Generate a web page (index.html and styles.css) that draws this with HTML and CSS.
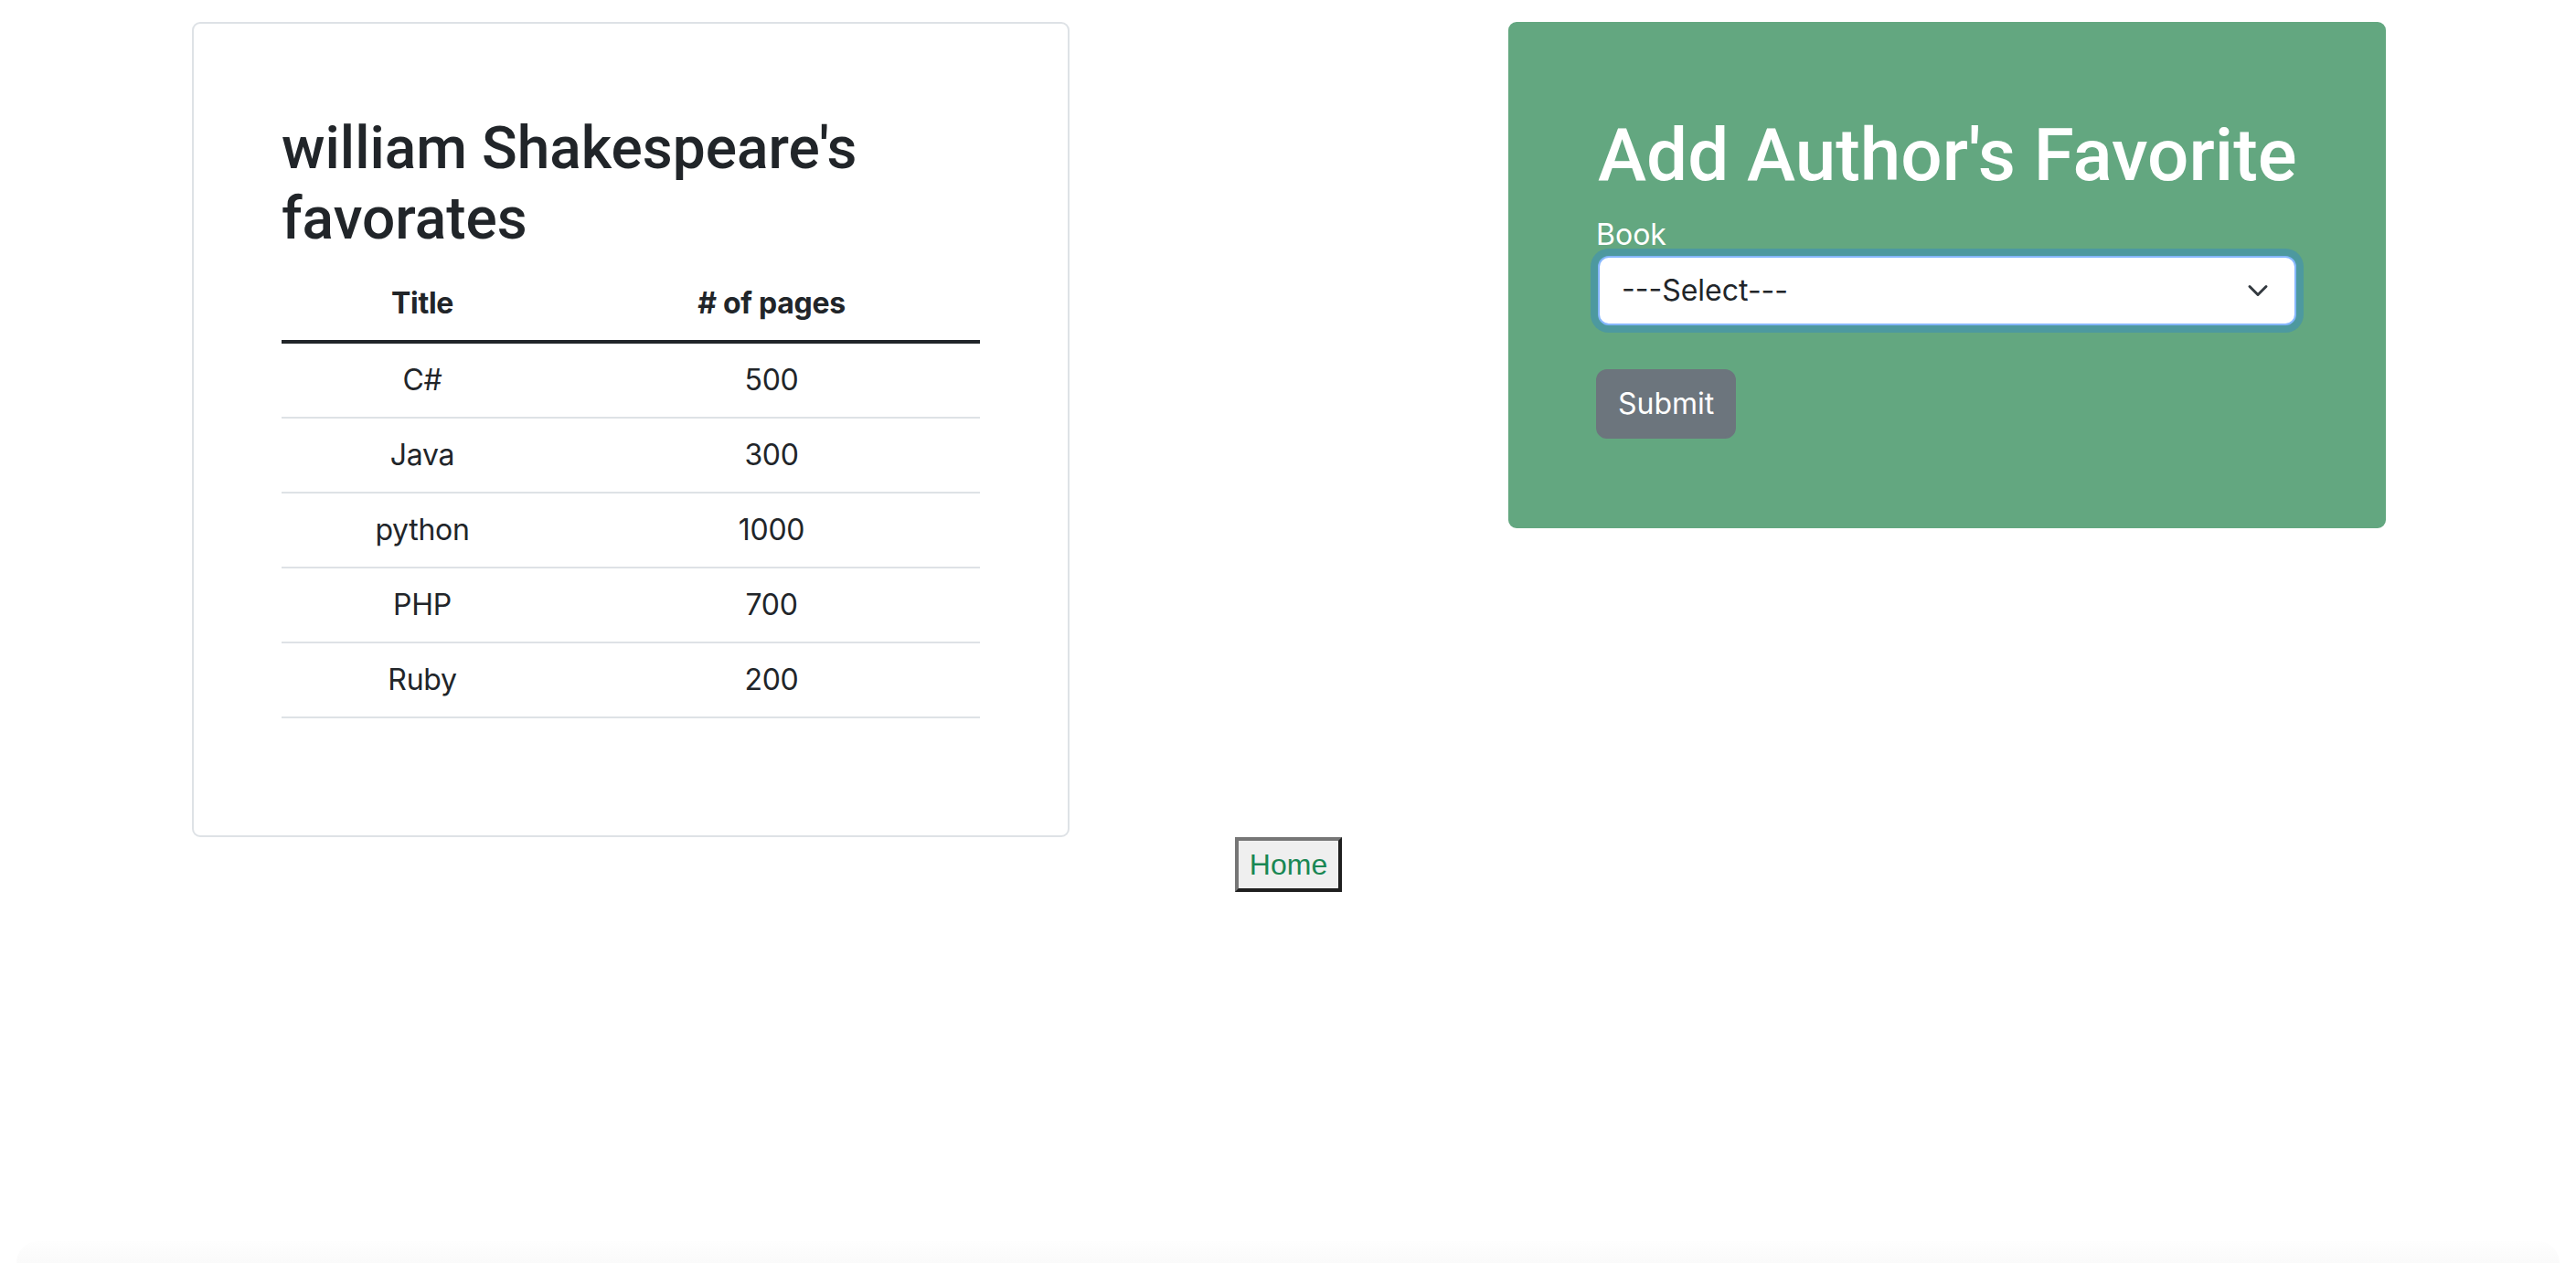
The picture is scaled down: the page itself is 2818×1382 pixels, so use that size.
FILE: index.html
```html
<!DOCTYPE html>
<html lang="en">
<head>
<meta charset="utf-8">
<title>Author's Favorites</title>
<link rel="stylesheet" href="styles.css">
</head>
<body>
<div class="page">
  <div class="cards">
    <section class="card card-list">
      <h2 class="title">william Shakespeare's favorates</h2>
      <table class="books">
        <colgroup><col class="col-title"><col class="col-pages"></colgroup>
        <thead>
          <tr><th>Title</th><th># of pages</th></tr>
        </thead>
        <tbody>
          <tr><td>C#</td><td>500</td></tr>
          <tr><td>Java</td><td>300</td></tr>
          <tr><td>python</td><td>1000</td></tr>
          <tr><td>PHP</td><td>700</td></tr>
          <tr><td>Ruby</td><td>200</td></tr>
        </tbody>
      </table>
    </section>
    <section class="card card-form">
      <h1 class="form-title">Add Author's Favorite</h1>
      <form class="fav-form">
        <label class="lbl" for="book">Book</label>
        <div class="select-wrap">
          <select id="book" class="sel">
            <option>---Select---</option>
          </select>
          <svg class="chev" viewBox="0 0 16 16" width="24" height="24" aria-hidden="true"><path d="m2 5 6 6 6-6" fill="none" stroke="#343a40" stroke-width="2" stroke-linecap="round" stroke-linejoin="round"/></svg>
        </div>
        <button type="button" class="btn-submit">Submit</button>
      </form>
    </section>
  </div>
  <div class="home-wrap">
    <button type="button" class="home"><a class="home-link" href="#">Home</a></button>
  </div>
</div>
<div class="bottom-shade"></div>
</body>
</html>
```

FILE: styles.css
```css
* { box-sizing: border-box; }

html, body {
  margin: 0;
  padding: 0;
  background: #fff;
}

body {
  font-family: Inter, "Noto Sans", "Liberation Sans", sans-serif;
  font-size: 32px;
  line-height: 1.5;
  color: #212529;
}

.cards {
  display: flex;
  align-items: flex-start;
  gap: 480px;
  padding: 24px 208px 0 210px;
}

.card {
  width: 960px;
  flex: 0 0 960px;
  border: 2px solid #dee2e6;
  border-radius: 9px;
  padding: 96px;
}

.card-form {
  background: #63a780;
  border-color: #63a780;
  color: #fff;
}

.title {
  margin: 0 0 13px 0;
  padding-top: 3px;
  font-family: Roboto, Inter, sans-serif;
  font-size: 64px;
  font-weight: 500;
  line-height: 1.2;
  letter-spacing: 0;
}

.books {
  width: 100%;
  border-collapse: collapse;
  margin-bottom: 32px;
  text-align: center;
}

.col-title { width: 308px; }

.books th,
.books td {
  padding: 16px;
  line-height: 48px;
  border-bottom: 2px solid #dee2e6;
  letter-spacing: -0.3px;
}

.books th {
  font-weight: 700;
  border-bottom: 4px solid #212529;
}

.form-title {
  margin: 0 0 16px 0;
  font-family: Roboto, Inter, sans-serif;
  font-size: 80px;
  font-weight: 500;
  line-height: 1.2;
  letter-spacing: 0;
  white-space: nowrap;
}

.fav-form {
  display: flex;
  flex-direction: column;
  align-items: flex-start;
}

.lbl {
  line-height: 46px;
  font-size: 32px;
  margin-left: -2px;
}

.select-wrap {
  position: relative;
  width: 100%;
}

.sel {
  display: block;
  width: 100%;
  height: 76px;
  padding: 12px 72px 12px 24px;
  font-family: inherit;
  font-size: 32px;
  line-height: 48px;
  color: #212529;
  background: #fff;
  border: 2px solid #86b7fe;
  border-radius: 12px;
  box-shadow: 0 0 0 8px rgba(13, 110, 253, 0.25);
  appearance: none;
  -webkit-appearance: none;
  outline: none;
}

.chev {
  position: absolute;
  right: 30px;
  top: 26px;
  pointer-events: none;
}

.btn-submit {
  margin-top: 48px;
  margin-left: -2px;
  font-family: inherit;
  font-size: 32px;
  line-height: 48px;
  color: #fff;
  background: #6c757d;
  border: 2px solid #6c757d;
  border-radius: 12px;
  padding: 12px 22px;
}

.home-wrap {
  display: flex;
  justify-content: center;
}

.home {
  margin: 0 0 0 1px;
  height: 60px;
  padding: 0 12px;
  background: #efefef;
  border-style: solid;
  border-width: 4px;
  border-color: #767676 #1f1f1f #1f1f1f #767676;
  font-family: "Liberation Sans", Arial, sans-serif;
  font-size: 32px;
  line-height: 36px;
}

.home-link {
  color: #198754;
  text-decoration: none;
  font-family: "Liberation Sans", Arial, sans-serif;
  font-size: 32px;
}

.bottom-shade {
  position: fixed;
  left: 18px;
  right: 18px;
  bottom: 0;
  height: 24px;
  border-radius: 24px 24px 0 0;
  background: linear-gradient(#fefefe, #fafafa);
}
```
